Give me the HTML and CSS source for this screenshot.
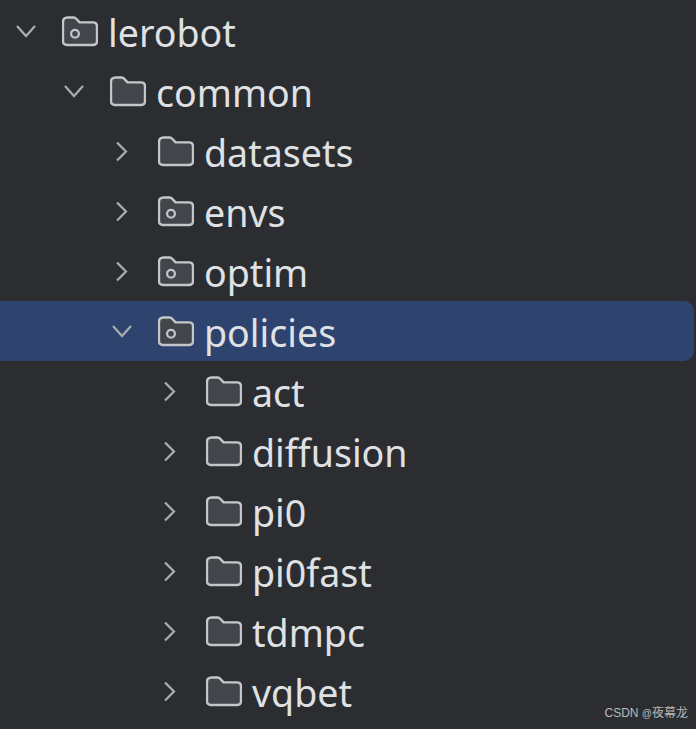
FILE: index.html
```html
<!DOCTYPE html>
<html lang="en">
<head>
<meta charset="utf-8">
<title>Project tree</title>
<link rel="stylesheet" href="styles.css">
</head>
<body>
<svg class="defs" width="0" height="0" aria-hidden="true">
  <defs>
    <symbol id="folder" viewBox="0 0 36 32">
      <path d="M1 6C1 3.2 2.6 1.5 5.4 1.5H11.5C12.7 1.5 13.5 1.9 14.2 2.7L17.6 6.4H31C33.6 6.4 35 7.9 35 10.4V25C35 27.6 33.6 29 31 29H5C2.4 29 1 27.6 1 25Z" fill="#43454a" stroke="#c4c6cc" stroke-width="2.4" stroke-linejoin="round"/>
    </symbol>
    <symbol id="module" viewBox="0 0 36 32">
      <path d="M1 6C1 3.2 2.6 1.5 5.4 1.5H11.5C12.7 1.5 13.5 1.9 14.2 2.7L17.6 6.4H31C33.6 6.4 35 7.9 35 10.4V25C35 27.6 33.6 29 31 29H5C2.4 29 1 27.6 1 25Z" fill="#43454a" stroke="#c4c6cc" stroke-width="2.4" stroke-linejoin="round"/>
      <circle cx="13" cy="17.8" r="3.9" fill="none" stroke="#c4c6cc" stroke-width="2.2"/>
    </symbol>
    <symbol id="open" viewBox="0 0 20 20">
      <path d="M1 4L10 14L19 4" fill="none" stroke="#a8adb5" stroke-width="2.2"/>
    </symbol>
    <symbol id="closed" viewBox="0 0 20 20">
      <path d="M5 .5L14 9.5L5 18.5" fill="none" stroke="#a8adb5" stroke-width="2.2"/>
    </symbol>
  </defs>
</svg>
<ul class="tree">
  <li class="row depth-0"><svg class="chev"><use href="#open"/></svg><svg class="icon"><use href="#module"/></svg><span class="label">lerobot</span></li>
  <li class="row depth-1"><svg class="chev"><use href="#open"/></svg><svg class="icon"><use href="#folder"/></svg><span class="label">common</span></li>
  <li class="row depth-2"><svg class="chev"><use href="#closed"/></svg><svg class="icon"><use href="#folder"/></svg><span class="label">datasets</span></li>
  <li class="row depth-2"><svg class="chev"><use href="#closed"/></svg><svg class="icon"><use href="#module"/></svg><span class="label">envs</span></li>
  <li class="row depth-2"><svg class="chev"><use href="#closed"/></svg><svg class="icon"><use href="#module"/></svg><span class="label">optim</span></li>
  <li class="row depth-2 selected"><svg class="chev"><use href="#open"/></svg><svg class="icon"><use href="#module"/></svg><span class="label">policies</span></li>
  <li class="row depth-3"><svg class="chev"><use href="#closed"/></svg><svg class="icon"><use href="#folder"/></svg><span class="label">act</span></li>
  <li class="row depth-3"><svg class="chev"><use href="#closed"/></svg><svg class="icon"><use href="#folder"/></svg><span class="label">diffusion</span></li>
  <li class="row depth-3"><svg class="chev"><use href="#closed"/></svg><svg class="icon"><use href="#folder"/></svg><span class="label">pi0</span></li>
  <li class="row depth-3"><svg class="chev"><use href="#closed"/></svg><svg class="icon"><use href="#folder"/></svg><span class="label">pi0fast</span></li>
  <li class="row depth-3"><svg class="chev"><use href="#closed"/></svg><svg class="icon"><use href="#folder"/></svg><span class="label">tdmpc</span></li>
  <li class="row depth-3"><svg class="chev"><use href="#closed"/></svg><svg class="icon"><use href="#folder"/></svg><span class="label">vqbet</span></li>
</ul>
<div class="watermark">CSDN <span class="at">@</span>夜幕龙</div>
</body>
</html>
```
FILE: styles.css
```css
html, body {
  margin: 0;
  height: 100%;
  overflow: hidden;
}
body {
  position: relative;
  background: #2b2d30;
  font-family: "Noto Sans", "Noto Sans CJK SC", sans-serif;
}
.defs {
  position: absolute;
}
.tree {
  list-style: none;
  margin: 0;
  padding: 1px 0 0;
}
.row {
  display: flex;
  align-items: center;
  height: 60px;
  box-sizing: border-box;
  padding: 4px 0 0 16px;
}
.depth-1 { padding-left: 64px; }
.depth-2 { padding-left: 112px; }
.depth-3 { padding-left: 160px; }
.selected {
  background: #2e436e;
  border-radius: 0 10px 10px 0;
  margin-right: 2px;
}
.chev {
  width: 20px;
  height: 20px;
  flex: none;
  margin-right: 26px;
  margin-top: -3px;
}
.icon {
  width: 36px;
  height: 32px;
  flex: none;
  margin-top: -3px;
  margin-right: 10px;
}
.label {
  color: #dfe1e5;
  font-size: 37.6px;
  line-height: 56px;
  white-space: nowrap;
}
.watermark {
  position: absolute;
  right: 8px;
  bottom: 7px;
  color: #b9babc;
  font-size: 12px;
  line-height: 16px;
  font-family: "Liberation Sans", "Noto Sans CJK SC", sans-serif;
}
.at {
  font-size: 10px;
}
```
